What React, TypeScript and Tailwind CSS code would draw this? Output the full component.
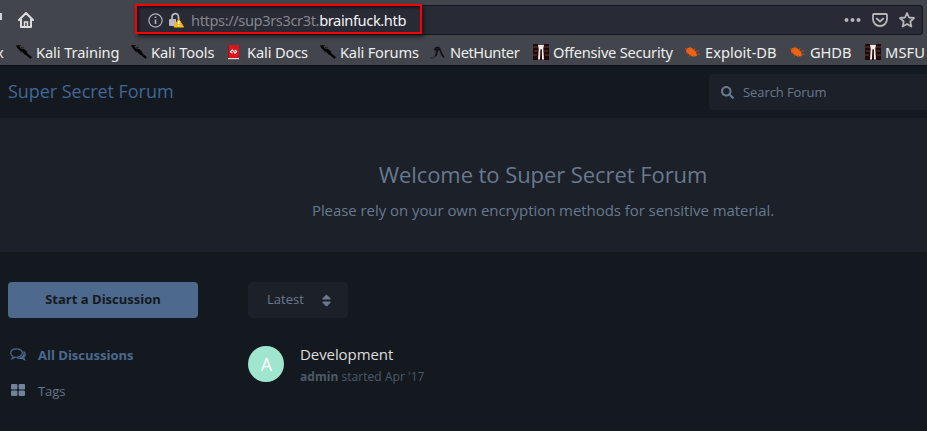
import type { ReactNode } from "react";
import { FaSearch, FaSort } from "react-icons/fa";

function KaliIcon() {
  return (
    <svg width="16" height="16" viewBox="0 0 16 16" fill="#060607">
      <path d="M0 1.500 2.500 1 5 4.500l3 .5 2.500 2L12 10l4 3-1.500 2-4-3.500-2.500-1.500-1.500-2L4 7 1.500 4z" />
      <path d="M2.500 1.500 5 1.500M5 3.500l3-.3M4 7.500l1.500 1" fill="none" stroke="#17181b" strokeWidth=".8" />
    </svg>
  );
}

function DocsIcon() {
  return (
    <svg width="14" height="16" viewBox="0 0 14 16">
      <path d="M1 1h11v13H1z" fill="#d9151b" />
      <path d="M1 14h11v1.200H1z" fill="#e4dada" />
      <path d="M1.500 1v13" stroke="#a01319" />
      <path d="M5.800 5.500 3.500 7.700l2 1.500M7.700 6l2 1.500-2.200 2.200M5.800 6.500l2 2.200" fill="none" stroke="#fff" strokeWidth="1.100" />
    </svg>
  );
}

function NetHunterIcon() {
  return (
    <svg width="15" height="16" viewBox="0 0 15 16" fill="none">
      <path d="M0 14c3-.2 5-1 5.500-3" stroke="#303235" strokeWidth="1.600" />
      <path d="M5.500 12 7 9M4.500 6C6 2.500 9 2.500 10 5.500c1 2.500 1 5 4 8M4.500 6 8 5.500 6 9.500" stroke="#111214" strokeWidth="1.700" />
    </svg>
  );
}

function OffsecIcon() {
  return (
    <svg width="16" height="16" viewBox="0 0 16 16">
      <path d="M0 0h16v16H0z" fill="#220808" />
      <path d="M0 3h5M11 3h5M1 7h4M11 7h4M0 11h4M12 11h4" stroke="#604743" strokeWidth=".9" />
      <path d="M5 .8h6l-.7 4 .7 10.700H9L8.500 6h-1L7 15.500H5L5.700 5z" fill="#eeeae7" />
      <path d="M8.200 5v11" stroke="#1a0909" strokeWidth="1" />
    </svg>
  );
}

function BugIcon() {
  return (
    <svg width="15" height="16" viewBox="0 0 15 16">
      <path d="M1 6c1-2.500 4-3.500 7-1l3 3 1 4c-3 1-5 .5-8-1.500C2 9 1 8 1 6z" fill="#f26211" />
      <path d="m0 4.500 4 1.500M1 9l4-1M5 2.500l1 3M10 4 9 7M14 6.500 10 8M4 13l2-3M15 10.500l-4-.5M7 13l2-2" stroke="#c9581d" strokeWidth=".7" />
    </svg>
  );
}

function Bookmark({ width, spacing = "tracking-[-0.1px]", icon, children }: { width: string; spacing?: string; icon: ReactNode; children: ReactNode }) {
  return (
    <div className={`flex h-6 shrink-0 items-center ${width}`}>
      <span className="flex w-5 shrink-0">{icon}</span>
      <span className={`whitespace-nowrap ${spacing}`}>{children}</span>
    </div>
  );
}

function Browser() {
  return (
    <header className="h-[66px] border-b border-[#0c0d10] bg-[#42454c] font-['Noto_Sans',sans-serif] text-[#eeeeec]">
      <div className="flex h-[35px] pt-[5px]">
        <div className="flex w-[137px] shrink-0">
          <i className="mt-[8px] h-[7px] w-[2px] bg-[#d3d3d5]" />
          <svg className="mt-[6px] ml-4" width="16" height="18" viewBox="0 0 16 18" fill="none" stroke="#dedee0" strokeWidth="2">
            <path d="M1 9 8 2l7 7M3 8v8h10V8" strokeLinecap="round" strokeLinejoin="round" />
            <path d="M6.500 16v-5h3v5" strokeWidth="1.500" />
          </svg>
        </div>
        <div className="relative flex h-[30px] w-[786px] items-center rounded-[3px] border border-[#15161a] bg-[#282a36] pl-[10px]">
          <svg width="15" height="15" viewBox="0 0 15 15" fill="none" stroke="#b2b2b8" strokeWidth="1.200">
            <circle cx="7.500" cy="7.500" r="6.600" />
            <path d="M7.500 6.500v4.500M7.500 3.500v1.600" strokeWidth="1.600" />
          </svg>
          <svg className="ml-[6px]" width="15" height="16" viewBox="0 0 15 16">
            <path d="M3 7V5C3 1 9.500 0 9.500 5v2" fill="none" stroke="#bababd" strokeWidth="1.700" />
            <path d="M0 8q0-1 1-1h6v7H1q-1 0-1-1z" fill="#bababd" />
            <path d="M9.700 7 14.500 15H5z" fill="#ffb50a" stroke="#ffb50a" strokeLinejoin="round" />
            <path d="M9.700 9v3M9.700 13v1.500" stroke="#fff" strokeWidth="1.400" />
          </svg>
          <div className="ml-[7px] text-[14.670px] leading-5 tracking-[-0.4px] whitespace-nowrap text-[#85868c]">
            https://sup3rs3cr3t.<span className="text-[#f5f5f5]">brainfuck.htb</span>
          </div>
          <div className="mr-[7px] ml-auto flex items-center gap-[11px] text-[#b5b5b8]">
            <svg width="17" height="16" viewBox="0 0 17 16" fill="currentColor">
              <circle cx="2.500" cy="8" r="2" /><circle cx="8.500" cy="8" r="2" /><circle cx="14.500" cy="8" r="2" />
            </svg>
            <svg width="16" height="16" viewBox="0 0 16 16" fill="none" stroke="currentColor" strokeWidth="1.800" strokeLinecap="round" strokeLinejoin="round">
              <path d="M2 2h12q1 0 1 1v4c0 4-3 7-7 7s-7-3-7-7V3q0-1 1-1z" />
              <path d="m4.700 6.500 3.300 3 3.300-3" />
            </svg>
            <svg width="16" height="16" viewBox="0 0 16 16" fill="none" stroke="currentColor" strokeWidth="1.800" strokeLinejoin="round">
              <path d="m8 1 2 4.500 5 .5-3.700 3.500 1 5L8 12l-4.300 2.500 1-5L1 6l5-.5z" />
            </svg>
          </div>
          <div className="absolute -top-[2px] -left-[3px] h-[30px] w-[287px] border-2 border-[#fa0000] shadow-[2px_3px_4px_#00000080,inset_2px_2px_3px_#00000080]" />
        </div>
      </div>
      <nav className="flex h-[30px] pt-[5px] text-[14.670px] leading-6">
        <span className="flex w-4 shrink-0"><span className="-ml-[4px]">x</span></span>
        <Bookmark width="w-[115px]" icon={<KaliIcon />}>Kali Training</Bookmark>
        <Bookmark width="w-[96px]" icon={<KaliIcon />}>Kali Tools</Bookmark>
        <Bookmark width="w-[93px]" spacing="tracking-[-0.15px]" icon={<DocsIcon />}>Kali Docs</Bookmark>
        <Bookmark width="w-[110px]" spacing="tracking-[-0.2px]" icon={<KaliIcon />}>Kali Forums</Bookmark>
        <Bookmark width="w-[103px]" spacing="tracking-[-0.45px]" icon={<NetHunterIcon />}>NetHunter</Bookmark>
        <Bookmark width="w-[152px]" spacing="tracking-[-0.25px]" icon={<OffsecIcon />}>Offensive Security</Bookmark>
        <Bookmark width="w-[105px]" spacing="tracking-normal" icon={<BugIcon />}>Exploit-DB</Bookmark>
        <Bookmark width="w-[75px]" icon={<BugIcon />}>GHDB</Bookmark>
        <Bookmark width="w-[62px]" spacing="tracking-[0.1px]" icon={<OffsecIcon />}>MSFU</Bookmark>
      </nav>
    </header>
  );
}

function Discussions() {
  return (
    <main className="flex px-2 pt-[30px]">
      <aside className="w-[190px]">
        <button className="block h-9 w-full rounded-[4px] bg-[#4d698e] text-[13px] font-bold text-[#14191f]">Start a Discussion</button>
        <div className="mt-[26px] flex h-6 items-center text-[13px] font-bold text-[#4d698e]">
          <svg className="mr-3 ml-[2px] -translate-y-px" width="16" height="14" viewBox="0 0 16 14" fill="none" stroke="currentColor" strokeWidth="1.200">
            <path d="M6.500.8C3 .8.700 2.600.700 5c0 1.500.9 2.700 2.300 3.400L2 10.700l3-1.500c4.500.4 7.300-1.500 7.300-4.200C12.300 2.600 10 .8 6.500.8z" />
            <path d="M13.500 3.500c2.500 2 2 4.500 0 5.700l1.200 2.500-3-1.500c-2 .3-4 0-5-.7" />
            <path d="M13.500 4c.5 3-2 5.500-5 6l3 .2 3 1.500-1.200-2.500c2-1.200 2-3.700.2-5.200z" fill="currentColor" stroke="none" />
          </svg>
          All Discussions
        </div>
        <div className="mt-3 flex h-6 items-center text-[13px] tracking-[-0.1px] text-[#667689]">
          <svg className="mr-[13px] ml-[3px] -translate-y-[2px]" width="14" height="12" viewBox="0 0 14 12" fill="#71829b">
            <rect width="6.400" height="5.400" rx="1" /><rect x="7.600" width="6.400" height="5.400" rx="1" />
            <rect y="6.600" width="6.400" height="5.400" rx="1" /><rect x="7.600" y="6.600" width="6.400" height="5.400" rx="1" />
          </svg>
          Tags
        </div>
      </aside>
      <section className="ml-[50px]">
        <button className="flex h-9 w-[100px] items-center rounded-[4px] bg-[#1c2028] pr-[14px] pl-[19px] text-[13px] text-[#68798f]">
          Latest<FaSort className="ml-auto text-[15px]" />
        </button>
        <article className="mt-7 flex">
          <div className="flex size-9 items-center justify-center rounded-full bg-[#a0e5ce] pl-px text-[18px] text-white">A</div>
          <div className="-mt-px ml-4">
            <h2 className="text-[15px] leading-[18px] tracking-[-0.08px] text-[#dedede]">Development</h2>
            <p className="mt-[5px] text-[12px] leading-[18px] tracking-[0.04px] text-[#4b596b]"><b>admin</b> started Apr '17</p>
          </div>
        </article>
      </section>
    </main>
  );
}

export default function App() {
  return (
    <div className="h-[431px] w-[927px] overflow-hidden bg-[#14191f] font-['Open_Sans',sans-serif]">
      <Browser />
      <header className="flex h-[52px] justify-between pl-2">
        <h1 className="pt-[13px] text-[18px] leading-6 tracking-[-0.05px] text-[#426799]">Super Secret Forum</h1>
        <div className="mt-2 flex h-9 w-[218px] items-center rounded-l-[4px] bg-[#1c2028] pl-3 text-[13px] tracking-[-0.08px] text-[#68798f]">
          <FaSearch className="mr-[9px] text-[13px]" /><span className="pt-[2px]">Search Forum</span>
        </div>
      </header>
      <section className="h-[134px] bg-[#1c2028] pt-[40px] pl-[159px] text-center text-[#68798f]">
        <h2 className="text-[22px] leading-8 tracking-[-0.07px]">Welcome to Super Secret Forum</h2>
        <p className="mt-[8px] text-[15px] leading-6 tracking-[-0.06px]">Please rely on your own encryption methods for sensitive material.</p>
      </section>
      <Discussions />
    </div>
  );
}
